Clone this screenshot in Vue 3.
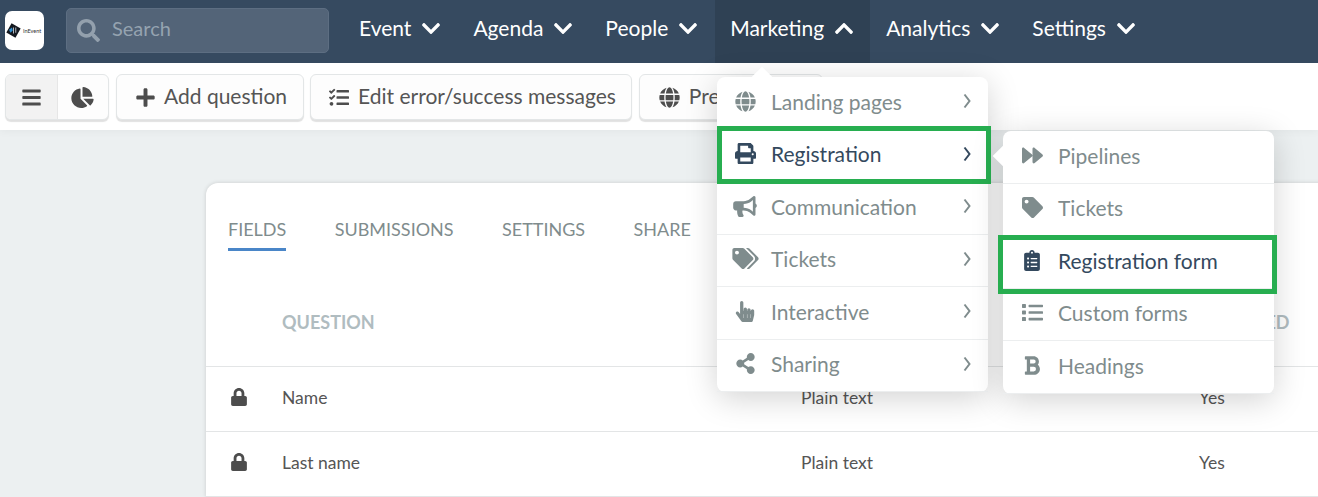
<script setup>
const I = {
  search: [512, 'M505 442.7L405.3 343c-4.5-4.5-10.6-7-17-7H372c27.6-35.3 44-79.7 44-128C416 93.1 322.9 0 208 0S0 93.1 0 208s93.1 208 208 208c48.3 0 92.7-16.4 128-44v16.3c0 6.4 2.5 12.5 7 17l99.7 99.7c9.4 9.4 24.6 9.4 33.9 0l28.3-28.3c9.4-9.4 9.4-24.6.1-34zM208 336c-70.7 0-128-57.2-128-128 0-70.7 57.2-128 128-128 70.7 0 128 57.2 128 128 0 70.7-57.2 128-128 128z'],
  down: [448, 'M207.029 381.476L12.686 187.132c-9.373-9.373-9.373-24.569 0-33.941l22.667-22.667c9.357-9.357 24.522-9.375 33.901-.04L224 284.505l154.745-154.021c9.379-9.335 24.544-9.317 33.901.04l22.667 22.667c9.373 9.373 9.373 24.569 0 33.941L240.971 381.476c-9.373 9.372-24.569 9.372-33.942 0z'],
  up: [448, 'M240.971 130.524l194.343 194.343c9.373 9.373 9.373 24.569 0 33.941l-22.667 22.667c-9.357 9.357-24.522 9.375-33.901.04L224 227.495 69.255 381.516c-9.379 9.335-24.544 9.317-33.901-.04l-22.667-22.667c-9.373-9.373-9.373-24.569 0-33.941L207.03 130.525c9.372-9.373 24.568-9.373 33.941-.001z'],
  bars: [448, 'M16 132h416c8.837 0 16-7.163 16-16V76c0-8.837-7.163-16-16-16H16C7.163 60 0 67.163 0 76v40c0 8.837 7.163 16 16 16zm0 160h416c8.837 0 16-7.163 16-16v-40c0-8.837-7.163-16-16-16H16c-8.837 0-16 7.163-16 16v40c0 8.837 7.163 16 16 16zm0 160h416c8.837 0 16-7.163 16-16v-40c0-8.837-7.163-16-16-16H16c-8.837 0-16 7.163-16 16v40c0 8.837 7.163 16 16 16z'],
  pie: [544, 'M527.79 288H290.5l158.03 158.03c6.04 6.04 15.98 6.53 22.19.68 38.7-36.46 65.32-85.61 73.13-140.86 1.34-9.46-6.51-17.85-16.06-17.85zm-15.83-64.8C503.72 103.74 408.26 8.28 288.8.04 279.68-.59 272 7.1 272 16.24V240h223.77c9.14 0 16.82-7.68 16.19-16.8zM224 288V50.71c0-9.55-8.39-17.4-17.84-16.06C86.99 51.49-4.1 155.6.14 280.37 4.5 408.51 114.83 513.59 243.03 511.98c50.4-.63 96.97-16.87 135.26-44.03 7.9-5.6 8.42-17.23 1.57-24.08L224 288z'],
  plus: [448, 'M416 208H272V64c0-17.67-14.33-32-32-32h-32c-17.67 0-32 14.33-32 32v144H32c-17.67 0-32 14.33-32 32v32c0 17.67 14.33 32 32 32h144v144c0 17.67 14.33 32 32 32h32c17.67 0 32-14.33 32-32V304h144c17.67 0 32-14.33 32-32v-32c0-17.67-14.33-32-32-32z'],
  tasks: [512, 'M139.61 35.5a12 12 0 0 0-17 0L58.93 98.81l-22.7-22.12a12 12 0 0 0-17 0L3.53 92.41a12 12 0 0 0 0 17l47.59 47.4a12.78 12.78 0 0 0 17.61 0l15.59-15.62L156.52 69a12.09 12.09 0 0 0 .09-17zm0 159.19a12 12 0 0 0-17 0l-63.68 63.72-22.7-22.1a12 12 0 0 0-17 0L3.53 252a12 12 0 0 0 0 17L51 316.5a12.77 12.77 0 0 0 17.6 0l15.7-15.69 72.2-72.22a12 12 0 0 0 .09-16.9zM64 368c-26.49 0-48.59 21.5-48.59 48S37.53 464 64 464a48 48 0 0 0 0-96zm432 16H208a16 16 0 0 0-16 16v32a16 16 0 0 0 16 16h288a16 16 0 0 0 16-16v-32a16 16 0 0 0-16-16zm0-320H208a16 16 0 0 0-16 16v32a16 16 0 0 0 16 16h288a16 16 0 0 0 16-16V80a16 16 0 0 0-16-16zm0 160H208a16 16 0 0 0-16 16v32a16 16 0 0 0 16 16h288a16 16 0 0 0 16-16v-32a16 16 0 0 0-16-16z'],
  globe: [496, 'M336.5 160C322 70.7 287.8 8 248 8s-74 62.7-88.5 152h177zM152 256c0 22.2 1.2 43.5 3.3 64h185.3c2.1-20.5 3.3-41.8 3.3-64s-1.2-43.5-3.3-64H155.3c-2.1 20.5-3.3 41.8-3.3 64zm324.7-96c-28.6-67.9-86.5-120.4-158-141.6 24.4 33.8 41.2 84.7 50 141.6h108zM177.2 18.4C105.8 39.6 47.8 92.1 19.3 160h108c8.7-56.9 25.5-107.8 49.9-141.6zM487.4 192H372.7c2.1 21 3.3 42.5 3.3 64s-1.2 43-3.3 64h114.6c5.5-20.5 8.6-41.8 8.6-64s-3.1-43.5-8.5-64zM120 256c0-21.5 1.2-43 3.3-64H8.6C3.2 212.5 0 233.8 0 256s3.2 43.5 8.6 64h114.6c-2-21-3.2-42.5-3.2-64zm39.5 96c14.5 89.3 48.7 152 88.5 152s74-62.7 88.5-152h-177zm159.3 141.6c71.4-21.2 129.4-73.7 158-141.6h-108c-8.8 56.9-25.6 107.8-50 141.6zM19.3 352c28.6 67.9 86.5 120.4 158 141.6-24.4-33.8-41.2-84.7-50-141.6h-108z'],
  print: [512, 'M448 192V77.25c0-8.49-3.37-16.62-9.37-22.63L393.37 9.37c-6-6-14.14-9.37-22.63-9.37H96C78.33 0 64 14.33 64 32v160c-35.35 0-64 28.65-64 64v112c0 8.84 7.16 16 16 16h48v96c0 17.67 14.33 32 32 32h320c17.67 0 32-14.33 32-32v-96h48c8.84 0 16-7.16 16-16V256c0-35.35-28.65-64-64-64zm-64 256H128v-96h256v96zm0-224H128V64h192v48c0 8.84 7.16 16 16 16h48v96zm48 72c-13.25 0-24-10.75-24-24 0-13.26 10.75-24 24-24s24 10.74 24 24c0 13.25-10.75 24-24 24z'],
  bullhorn: [576, 'M576 240c0-23.63-12.95-44.04-32-55.12V32.01C544 23.26 537.02 0 512 0c-7.12 0-14.19 2.38-19.98 7.02l-85.03 68.03C364.28 109.19 310.66 128 256 128H64c-35.35 0-64 28.65-64 64v96c0 35.35 28.65 64 64 64h33.7c-1.39 10.48-2.18 21.14-2.18 32 0 39.77 9.26 77.35 25.56 110.94 5.19 10.69 16.52 17.06 28.4 17.06h74.28c26.05 0 41.69-29.84 25.9-50.56-16.4-21.52-26.15-48.36-26.15-77.44 0-11.11 1.62-21.79 4.41-32H256c54.66 0 108.28 18.81 150.98 52.95l85.03 68.03a32.023 32.023 0 0 0 19.98 7.02c24.92 0 32-22.78 32-32V295.13C563.05 284.04 576 263.63 576 240zm-96 141.42l-33.05-26.44C392.95 311.78 325.12 288 256 288v-96c69.12 0 136.95-23.78 190.95-66.98L480 98.58v282.84z'],
  tags: [640, 'M497.941 225.941L286.059 14.059A48 48 0 0 0 252.118 0H48C21.49 0 0 21.49 0 48v204.118a48 48 0 0 0 14.059 33.941l211.882 211.882c18.744 18.745 49.136 18.746 67.882 0l204.118-204.118c18.745-18.745 18.745-49.137 0-67.882zM112 160c-26.51 0-48-21.49-48-48s21.49-48 48-48 48 21.49 48 48-21.49 48-48 48zm513.941 133.823L421.823 497.941c-18.745 18.745-49.137 18.745-67.882 0l-.36-.36L527.64 323.522c16.999-16.999 26.36-39.6 26.36-63.64s-9.362-46.641-26.36-63.64L331.397 0h48.721a48 48 0 0 1 33.941 14.059l211.882 211.882c18.745 18.745 18.745 49.137 0 67.882z'],
  tag: [512, 'M0 252.118V48C0 21.49 21.49 0 48 0h204.118a48 48 0 0 1 33.941 14.059l211.882 211.882c18.745 18.745 18.745 49.137 0 67.882L293.823 497.941c-18.745 18.745-49.137 18.745-67.882 0L14.059 286.059A48 48 0 0 1 0 252.118zM112 64c-26.51 0-48 21.49-48 48s21.49 48 48 48 48-21.49 48-48-21.49-48-48-48z'],
  hand: [448, 'M448 240v96c0 3.084-.356 6.159-1.063 9.162l-32 136C410.686 499.23 394.562 512 376 512H168a40.004 40.004 0 0 1-32.35-16.473l-127.997-176c-12.993-17.866-9.043-42.883 8.822-55.876 17.867-12.994 42.884-9.043 55.877 8.823L104 315.992V40c0-22.091 17.908-40 40-40s40 17.909 40 40v200h8v-40c0-22.091 17.908-40 40-40s40 17.909 40 40v40h8v-24c0-22.091 17.908-40 40-40s40 17.909 40 40v24h8c0-22.091 17.908-40 40-40s40 17.909 40 40zm-256 80h-8v96h8v-96zm88 0h-8v96h8v-96zm88 0h-8v96h8v-96z'],
  share: [448, 'M352 320c-22.608 0-43.387 7.819-59.79 20.895l-102.486-64.054a96.551 96.551 0 0 0 0-41.683l102.486-64.054C308.613 184.181 329.392 192 352 192c53.019 0 96-42.981 96-96S405.019 0 352 0s-96 42.981-96 96c0 7.158.79 14.13 2.276 20.841L155.79 180.895C139.387 167.819 118.608 160 96 160c-53.019 0-96 42.981-96 96s42.981 96 96 96c22.608 0 43.387-7.819 59.79-20.895l102.486 64.054A96.301 96.301 0 0 0 256 416c0 53.019 42.981 96 96 96s96-42.981 96-96-42.981-96-96-96z'],
  forward: [512, 'M500.5 231.4l-192-160C287.9 54.3 256 68.6 256 96v320c0 27.4 31.9 41.8 52.5 24.6l192-160c14.3-12 14.3-33.2 0-45.2zm-256 0l-192-160C31.9 54.3 0 68.6 0 96v320c0 27.4 31.9 41.8 52.5 24.6l192-160c14.3-12 14.3-33.2 0-45.2z'],
  clip: [384, 'M336 64h-80c0-35.3-28.7-64-64-64s-64 28.7-64 64H48C21.5 64 0 85.5 0 112v352c0 26.5 21.5 48 48 48h288c26.5 0 48-21.5 48-48V112c0-26.5-21.5-48-48-48zM96 424c-13.3 0-24-10.7-24-24s10.7-24 24-24 24 10.7 24 24-10.7 24-24 24zm0-96c-13.3 0-24-10.7-24-24s10.7-24 24-24 24 10.7 24 24-10.7 24-24 24zm0-96c-13.3 0-24-10.7-24-24s10.7-24 24-24 24 10.7 24 24-10.7 24-24 24zm96-192c13.3 0 24 10.7 24 24s-10.7 24-24 24-24-10.7-24-24 10.7-24 24-24zm128 368c0 4.4-3.6 8-8 8H168c-4.4 0-8-3.6-8-8v-16c0-4.4 3.6-8 8-8h144c4.4 0 8 3.6 8 8v16zm0-96c0 4.4-3.6 8-8 8H168c-4.4 0-8-3.6-8-8v-16c0-4.4 3.6-8 8-8h144c4.4 0 8 3.6 8 8v16zm0-96c0 4.4-3.6 8-8 8H168c-4.4 0-8-3.6-8-8v-16c0-4.4 3.6-8 8-8h144c4.4 0 8 3.6 8 8v16z'],
  list: [512, 'M80 368H16a16 16 0 0 0-16 16v64a16 16 0 0 0 16 16h64a16 16 0 0 0 16-16v-64a16 16 0 0 0-16-16zm0-320H16A16 16 0 0 0 0 64v64a16 16 0 0 0 16 16h64a16 16 0 0 0 16-16v-64a16 16 0 0 0-16-16zm0 160H16a16 16 0 0 0-16 16v64a16 16 0 0 0 16 16h64a16 16 0 0 0 16-16v-64a16 16 0 0 0-16-16zm416 176H176a16 16 0 0 0-16 16v32a16 16 0 0 0 16 16h320a16 16 0 0 0 16-16v-32a16 16 0 0 0-16-16zm0-320H176a16 16 0 0 0-16 16v32a16 16 0 0 0 16 16h320a16 16 0 0 0 16-16V80a16 16 0 0 0-16-16zm0 160H176a16 16 0 0 0-16 16v32a16 16 0 0 0 16 16h320a16 16 0 0 0 16-16v-32a16 16 0 0 0-16-16z'],
  bold: [384, 'M333.49 238a122 122 0 0 0 27-65.21C367.87 96.49 308 32 233.42 32H34a16 16 0 0 0-16 16v48a16 16 0 0 0 16 16h31.87v288H34a16 16 0 0 0-16 16v48a16 16 0 0 0 16 16h209.32c70.8 0 134.14-51.75 141-122.4 4.74-48.45-16.39-92.06-50.83-119.6zM145.66 112h87.76a48 48 0 0 1 0 96h-87.76zm87.76 288h-87.76V288h87.76a56 56 0 0 1 0 112z'],
  lock: [448, 'M400 224h-24v-72C376 68.2 307.8 0 224 0S72 68.2 72 152v72H48c-26.5 0-48 21.5-48 48v192c0 26.5 21.5 48 48 48h352c26.5 0 48-21.5 48-48V272c0-26.5-21.5-48-48-48zm-104 0H152v-72c0-39.7 32.3-72 72-72s72 32.3 72 72v72z'],
}
const nav = ['Event', 'Agenda', 'People', 'Marketing', 'Analytics', 'Settings']
const tabs = ['FIELDS', 'SUBMISSIONS', 'SETTINGS', 'SHARE']
const rows = ['Name', 'Last name']
const menu1 = [
  { t: 'Landing pages', i: 'globe', w: 21 },
  { t: 'Registration', i: 'print', w: 21, on: true },
  { t: 'Communication', i: 'bullhorn', w: 24 },
  { t: 'Tickets', i: 'tags', w: 27 },
  { t: 'Interactive', i: 'hand', w: 20 },
  { t: 'Sharing', i: 'share', w: 19 },
]
const menu2 = [
  { t: 'Pipelines', i: 'forward', w: 21 },
  { t: 'Tickets', i: 'tag', w: 21 },
  { t: 'Registration form', i: 'clip', w: 16, on: true },
  { t: 'Custom forms', i: 'list', w: 21 },
  { t: 'Headings', i: 'bold', w: 16 },
]
</script>

<template>
  <div class="page">
    <header class="topbar">
      <div class="logo">
        <svg class="logo-mark" viewBox="0 0 20 20">
          <rect x="3" y="3" width="14" height="14" fill="#14181f" transform="rotate(30 10 10)" />
          <path d="M4 9l4-3 1 4-3 3z" fill="#2f8fd0" />
          <path d="M10 6v8M13 6v7" stroke="#e8eef4" stroke-width="1" />
        </svg>
        <span class="logo-text">InEvent</span>
      </div>
      <div class="search">
        <svg class="search-icon" :viewBox="`0 0 ${I.search[0]} 512`"><path :d="I.search[1]" /></svg>
        <span class="lbl">Search</span>
      </div>
      <nav class="nav">
        <div v-for="n in nav" :key="n" class="nav-item" :class="{ active: n === 'Marketing' }">
          <span class="nav-label">{{ n }}</span>
          <svg class="caret" viewBox="0 0 448 512"><path :d="n === 'Marketing' ? I.up[1] : I.down[1]" /></svg>
        </div>
      </nav>
    </header>

    <div class="toolbar">
      <div class="btn-group">
        <div class="seg seg-on"><svg class="ti" viewBox="0 0 448 512" width="19" height="21"><path :d="I.bars[1]" /></svg></div>
        <div class="seg"><svg class="ti" viewBox="0 0 544 512" width="23" height="21"><path :d="I.pie[1]" /></svg></div>
      </div>
      <div class="btn btn-add"><svg class="ti" viewBox="0 0 448 512" width="19" height="21"><path :d="I.plus[1]" /></svg><span class="lbl">Add question</span></div>
      <div class="btn btn-edit"><svg class="ti" viewBox="0 0 512 512" width="20" height="21"><path :d="I.tasks[1]" /></svg><span class="lbl">Edit error/success messages</span></div>
      <div class="btn btn-last"><svg class="ti" viewBox="0 0 496 512" width="21" height="21"><path :d="I.globe[1]" /></svg><span class="lbl">Preview form</span></div>
    </div>

    <main class="content">
      <section class="card">
        <div class="tabs">
          <div v-for="(t, i) in tabs" :key="t" class="tab" :class="{ 'tab-on': i === 0 }">{{ t }}</div>
        </div>
        <div class="tr th">
          <div></div>
          <div>QUESTION</div>
          <div></div>
          <div>REQUIRED</div>
        </div>
        <div v-for="r in rows" :key="r" class="tr td">
          <svg class="lock" viewBox="0 0 448 512"><path :d="I.lock[1]" /></svg>
          <div>{{ r }}</div>
          <div>Plain text</div>
          <div>Yes</div>
        </div>
      </section>
    </main>

    <div class="menu menu-one">
      <span class="notch notch-top"></span>
      <div v-for="m in menu1" :key="m.t" class="mi" :class="{ 'mi-on': m.on }">
        <span class="mi-icon"><svg :viewBox="`0 0 ${I[m.i][0]} 512`" :style="{ width: m.w + 'px' }"><path :d="I[m.i][1]" /></svg></span>
        <span class="mi-text">{{ m.t }}</span>
        <svg class="mi-arrow" viewBox="0 0 8 16"><path d="M1.5 1.5L6.5 8l-5 6.5" /></svg>
      </div>
      <div class="mark mark-one"></div>
    </div>

    <div class="menu menu-two">
      <span class="notch notch-left"></span>
      <div v-for="m in menu2" :key="m.t" class="mi" :class="{ 'mi-on': m.on }">
        <span class="mi-icon"><svg :viewBox="`0 0 ${I[m.i][0]} 512`" :style="{ width: m.w + 'px' }"><path :d="I[m.i][1]" /></svg></span>
        <span class="mi-text">{{ m.t }}</span>
      </div>
      <div class="mark mark-two"></div>
    </div>
  </div>
</template>

<style>
html, body { margin: 0; padding: 0; background: #ecf0f1; }
</style>

<style scoped>
.page {
  position: relative;
  width: 1318px;
  height: 497px;
  overflow: hidden;
  background: #ecf0f1;
  font-family: Lato, "Noto Sans", sans-serif;
  color: #555;
}
.topbar {
  height: 63px;
  background: #364a60;
  display: flex;
  align-items: center;
  padding-left: 5px;
  box-sizing: border-box;
}
.logo {
  width: 39px;
  height: 39px;
  background: #fff;
  border-radius: 7px;
  display: flex;
  align-items: center;
  padding-left: 1px;
  box-sizing: border-box;
  gap: 2px;
  overflow: hidden;
  margin-bottom: 2px;
}
.logo-mark { width: 15px; height: 15px; flex: none; }
.logo-text { font-size: 5.5px; color: #333; white-space: nowrap; }
.search {
  margin: 0 0 2px 22px;
  width: 263px;
  height: 45px;
  background: #536478;
  border: 1px solid #5d6e82;
  border-radius: 5px;
  box-sizing: border-box;
  display: flex;
  align-items: center;
  padding-left: 10px;
  gap: 12px;
  color: #95a3b0;
  font-size: 20px;
}
.search .lbl { padding-bottom: 5px; }
.search-icon { width: 23px; height: 23px; fill: #93a0ad; }
.nav { display: flex; margin-left: 14px; height: 63px; }
.nav-item {
  display: flex;
  align-items: center;
  gap: 10px;
  padding: 0 16px 7px;
  box-sizing: border-box;
  font-size: 21px;
  color: #fff;
}
.nav-label { padding-bottom: 2px; }
.nav-item.active { background: #2f4154; padding-left: 15px; margin-left: 1px; }
.caret { width: 20px; height: 21px; fill: #fff; }
.toolbar {
  height: 67px;
  background: #fff;
  display: flex;
  align-items: flex-start;
  padding: 11px 0 0 5px;
  box-sizing: border-box;
  gap: 7px;
  box-shadow: 0 2px 8px rgba(0, 0, 0, 0.04);
  position: relative;
}
.btn-group, .btn {
  height: 46px;
  border: 1px solid #e3e6e7;
  border-radius: 6px;
  background: #fdfdfd;
  box-shadow: 0 2px 1px rgba(0, 0, 0, 0.12);
  box-sizing: border-box;
}
.btn-group { display: flex; width: 104px; overflow: hidden; }
.seg { width: 52px; display: flex; align-items: center; justify-content: center; }
.seg-on { background: #f2f2f2; border-right: 1px solid #e6e6e6; }
.ti { fill: #4d4d4d; flex: none; }
.btn {
  display: flex;
  align-items: center;
  gap: 9px;
  padding: 0 15px 0 19px;
  font-size: 21px;
  color: #555;
  white-space: nowrap;
}
.btn .lbl { padding-bottom: 4px; }
.btn-add { padding-right: 16px; margin-right: -1px; }
.btn-edit { padding-left: 18px; }
.btn-last { padding-right: 11px; }
.content { padding: 53px 0 0 206px; }
.card {
  width: 1200px;
  background: #fff;
  border-radius: 12px 0 0 0;
  box-shadow: 0 0 4px rgba(0, 0, 0, 0.15);
}
.tabs { display: flex; gap: 48.4px; padding: 33px 0 0 22px; height: 67px; box-sizing: border-box; }
.tab { font-size: 18px; color: #7f8c8d; height: 35px; line-height: 27px; box-sizing: border-box; }
.tab-on { border-bottom: 3px solid #4a86c8; }
.tr {
  display: grid;
  grid-template-columns: 76px 519px 398px 1fr;
  align-items: center;
  border-bottom: 1px solid #e3e5e6;
  box-sizing: border-box;
}
.th { height: 117px; padding-top: 27px; font-size: 18px; font-weight: 700; color: #b0bcc0; }
.td { height: 65px; padding-bottom: 4px; font-size: 17.5px; color: #555; }
.lock { width: 16px; height: 18px; fill: #4d4d4d; margin-left: 25px; }
.menu {
  position: absolute;
  width: 271px;
  background: #fff;
  border-radius: 8px;
  box-shadow: 0 6px 32px rgba(0, 0, 0, 0.18);
  display: flex;
  flex-direction: column;
}
.menu-one { left: 717px; top: 77px; height: 315px; }
.menu-two { left: 1003px; top: 131px; height: 262.5px; }
.notch {
  position: absolute;
  width: 16px;
  height: 16px;
  background: #fff;
  transform: rotate(45deg);
}
.notch-top { left: 37px; top: -7px; }
.notch-left { left: -7px; top: 17px; }
.mi {
  position: relative;
  flex: 1;
  display: flex;
  align-items: center;
  border-bottom: 1px solid #eceeef;
  color: #7f8c8d;
  font-size: 21px;
  padding: 0 0 3px 16px;
  box-sizing: border-box;
}
.menu-one .mi { padding-left: 15px; }
.mi:last-of-type { border-bottom: 0; }
.mi-on { color: #34495e; }
.mi-icon { width: 26px; height: 24px; margin-right: 13px; display: flex; align-items: center; justify-content: center; flex: none; }
.mi-icon svg { height: 21px; fill: #7f8c8d; flex: none; }
.mi-on .mi-icon svg { fill: #34495e; }
.mi-text { white-space: nowrap; }
.mi-arrow {
  position: absolute;
  right: 17px;
  top: 16px;
  width: 8px;
  height: 16px;
  fill: none;
  stroke: #7f8c8d;
  stroke-width: 2;
}
.mi-on .mi-arrow { stroke: #34495e; }
.mark {
  position: absolute;
  border: 5px solid #27ae50;
  box-sizing: border-box;
  pointer-events: none;
}
.mark-one { left: 0; top: 49px; width: 274px; height: 58px; }
.mark-two { left: -5px; top: 104px; width: 279px; height: 59px; }
</style>
